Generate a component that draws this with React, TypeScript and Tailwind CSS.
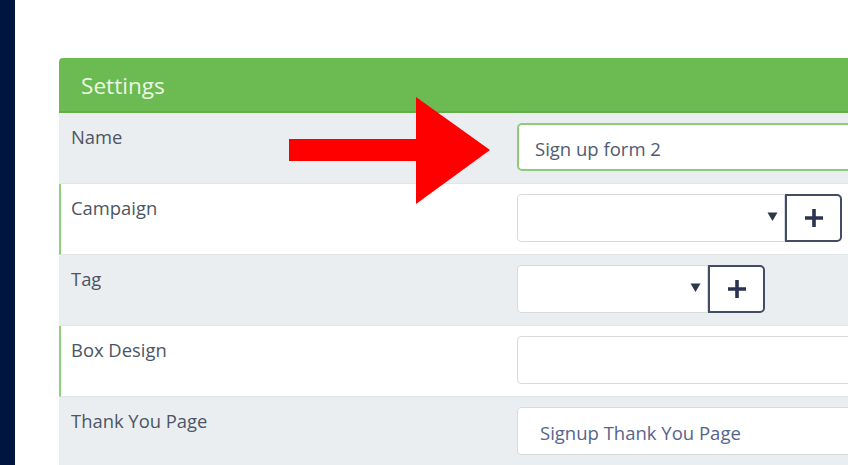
import React from "react";

const font = { fontFamily: '"Open Sans", "Noto Sans", sans-serif' };

function Row({
  label,
  gray,
  accent,
  children,
}: {
  label: string;
  gray?: boolean;
  accent?: boolean;
  children?: React.ReactNode;
}) {
  return (
    <div
      className={`flex h-[71px] border-b border-[#e1e5e8] ${gray ? "bg-[#ebeef0]" : "bg-white"} ${accent ? "border-l-2 border-l-[#8fd07d]" : "border-l-2 border-l-[#ebeef0]"}`}
    >
      <div className="w-[456px] shrink-0 pl-[10px] pt-[12px] text-[18.4px] leading-[24px] text-[#4b5565]">
        {label}
      </div>
      <div className="flex-1 pt-[10px]">{children}</div>
    </div>
  );
}

function Select({ width }: { width: number }) {
  return (
    <div className="flex h-[48px]">
      <div
        className="relative h-[48px] rounded-l-[4px] border border-[#d8dbde] bg-white"
        style={{ width }}
      >
        <svg className="absolute right-[6px] top-[16px]" width="11" height="11" viewBox="0 0 11 11">
          <path d="M0.5 1.5h10L5.5 10z" fill="#2d3748" />
        </svg>
      </div>
      <div className="flex h-[48px] w-[57px] items-center justify-center rounded-r-[5px] border-2 border-[#424c64] bg-white">
        <svg width="22" height="22" viewBox="0 0 22 22">
          <path d="M11 2v18M2 11h18" stroke="#2b3350" strokeWidth="3.6" />
        </svg>
      </div>
    </div>
  );
}

export default function App() {
  return (
    <div className="relative flex h-[465px] w-[848px] overflow-hidden bg-white" style={font}>
      <div className="w-[15px] shrink-0 bg-[#001540]" />
      <div className="flex-1 pl-[44px] pt-[58px]">
        <div className="w-[900px] overflow-hidden rounded-tl-[4px]">
          <div className="flex h-[55px] items-center border-b-2 border-[#63ad4b] bg-[#6cbb52] pl-[22px] pt-[2px] text-[22.6px] text-[#eaf6e2]">
            Settings
          </div>
          <Row label="Name" gray>
            <div className="flex h-[48px] w-[400px] items-center rounded-[5px] border-2 border-[#8dcb7a] bg-white pl-[16px] pt-[3px] text-[18.5px] text-[#505a72]">
              Sign up form 2
            </div>
          </Row>
          <Row label="Campaign" accent>
            <Select width={268} />
          </Row>
          <Row label="Tag" gray>
            <Select width={191} />
          </Row>
          <Row label="Box Design" accent>
            <div className="h-[48px] w-[400px] rounded-[4px] border border-[#d8dbde] bg-white" />
          </Row>
          <Row label="Thank You Page" gray>
            <div className="flex h-[48px] w-[400px] items-center rounded-[4px] border border-[#d8dbde] bg-white pl-[22px] pt-[3px] text-[18.5px] text-[#56658a]">
              Signup Thank You Page
            </div>
          </Row>
        </div>
      </div>
      <svg
        className="absolute left-0 top-0"
        width="848"
        height="465"
        viewBox="0 0 848 465"
      >
        <polygon
          points="289,139 416,139 416,97 490,150 416,204 416,161 289,161"
          fill="#ff0000"
        />
      </svg>
    </div>
  );
}
